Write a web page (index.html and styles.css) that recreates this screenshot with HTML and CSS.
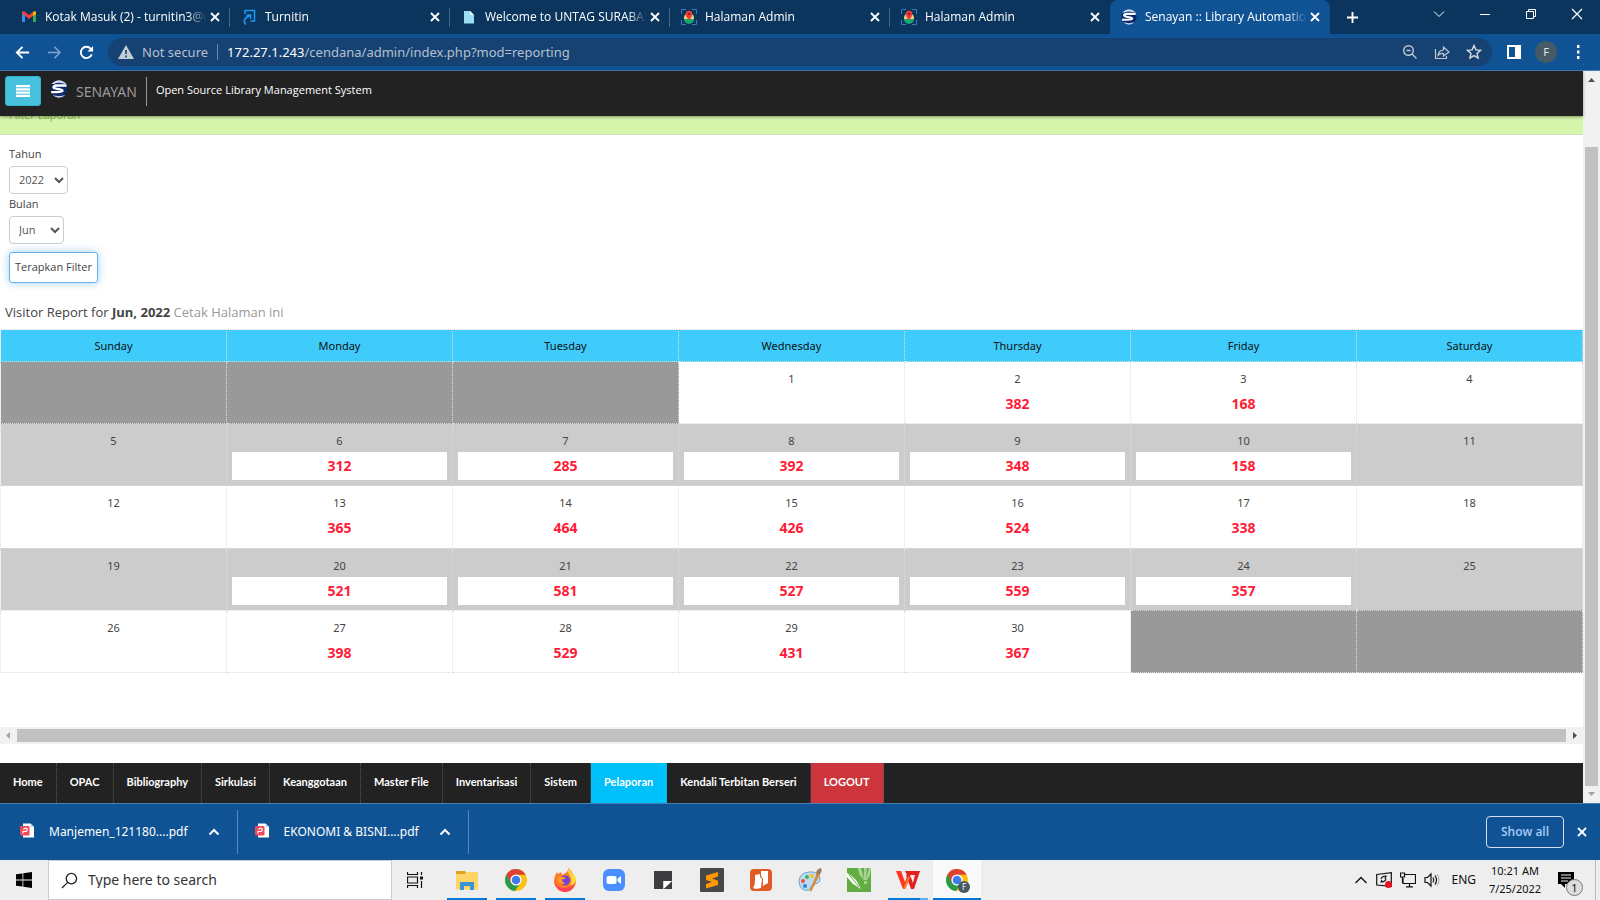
FILE: index.html
```html
<!DOCTYPE html>
<html lang="id">
<head>
<meta charset="utf-8">
<title>Senayan :: Library Automation</title>
<link rel="stylesheet" href="styles.css">
</head>
<body>
<svg class="defs" width="0" height="0" aria-hidden="true">
  <defs>
    <symbol id="x" viewBox="0 0 12 12"><path d="M2 2l8 8M10 2l-8 8" stroke="currentColor" stroke-width="1.8" fill="none"/></symbol>
    <symbol id="up" viewBox="0 0 12 12"><path d="M1.500 8.500L6 4l4.500 4.500" stroke="currentColor" stroke-width="2" fill="none"/></symbol>
    <symbol id="senayan" viewBox="0 0 18 18">
      <circle cx="9" cy="9" r="8.500" fill="#0b2a6b"/>
      <path d="M1.500 4Q9-3.500 16.500 4L13 3.500Q8 2 4 4z" fill="#cfdcef"/>
      <path d="M16.500 5.500H6.500Q3 5.700 3.500 7.500Q4.500 8.700 9 9.200Q13 9.800 12.500 11Q12 12.200 1.200 12.200" fill="none" stroke="#fff" stroke-width="2.300"/>
      <path d="M2.500 15Q9 20.500 15.500 15Q9 16.800 2.500 15z" fill="#c7d6ee"/>
    </symbol>
    <symbol id="map" viewBox="0 0 16 16">
      <path d="M.5 5V.5H5M11 .5h4.500V5M15.500 11v4.500H11M5 15.500H.5V11" fill="none" stroke="#3d78bd"/>
      <circle cx="8" cy="9" r="5" fill="#f4d27a"/>
      <path d="M3 10h10a5 5 0 0 1-10 0z" fill="#14a672"/>
      <path d="M8 11Q4.500 7.500 4.800 5a3.200 3.200 0 0 1 6.400 0Q11.500 7.500 8 11z" fill="#ef3b36"/><circle cx="8" cy="5" r="1.200" fill="#9d1c20"/>
    </symbol>
    <symbol id="pdf" viewBox="0 0 14 15">
      <path d="M3 .5h7.500L14 4v10.500H3z" fill="#fff"/><path d="M10.500.5V4H14z" fill="#c9d3e3"/>
      <rect y="3" width="9.500" height="9.500" rx="1" fill="#f04a5a"/>
      <path d="M3 10.500V8.500h2.500a1.700 1.700 0 1 0-1.700-1.700" fill="none" stroke="#fff" stroke-width="1.200"/>
    </symbol>
    <symbol id="chrome" viewBox="0 0 24 24">
      <circle cx="12" cy="12" r="11" fill="#fbc116"/>
      <path d="M12 12L2.500 6.500A11 11 0 0 0 11 23l5.500-8.500z" fill="#2a9a4b"/>
      <path d="M2.500 6.500A11 11 0 0 1 21.600 6.800H12L7 15z" fill="#dd4134"/>
      <circle cx="12" cy="12" r="5.600" fill="#fff"/><circle cx="12" cy="12" r="4.300" fill="#3b7bea"/>
    </symbol>
  </defs>
</svg>

<header class="browser">
  <div class="tabs">
    <div class="tab">
      <svg class="fav" viewBox="0 0 16 16"><path d="M1 3v10h3V6z" fill="#4285f4"/><path d="M12 6v7h3V3z" fill="#34a853"/><path d="M1 4.500V3Q2 1.500 4 3l4 3 4-3Q14 1.500 15 3v1.500L8 10z" fill="#ea4335"/><path d="M12 3.200Q14 1.500 15 3v2l-3 2.200z" fill="#fbbc04"/></svg>
      <span class="tab-title">Kotak Masuk (2) - turnitin3@u</span>
      <button class="tab-close" aria-label="Close tab"><svg><use href="#x"/></svg></button>
    </div>
    <div class="tab">
      <svg class="fav" viewBox="0 0 16 16"><path d="M4 5V1.500h9.500V12H9.500" fill="none" stroke="#1a9af5" stroke-width="1.500"/><path d="M5 15.500Q2.500 13.500 3.500 11T9 6.500M5.500 6h4v4" fill="none" stroke="#1a9af5" stroke-width="1.500"/></svg>
      <span class="tab-title">Turnitin</span>
      <button class="tab-close" aria-label="Close tab"><svg><use href="#x"/></svg></button>
    </div>
    <div class="tab">
      <svg class="fav" viewBox="0 0 16 16"><path d="M3 2h6l4 4v8.500H3z" fill="#9cddf5"/><path d="M9 2v4h4z" fill="#e8faff"/></svg>
      <span class="tab-title">Welcome to UNTAG SURABAY</span>
      <button class="tab-close" aria-label="Close tab"><svg><use href="#x"/></svg></button>
    </div>
    <div class="tab">
      <svg class="fav"><use href="#map"/></svg>
      <span class="tab-title">Halaman Admin</span>
      <button class="tab-close" aria-label="Close tab"><svg><use href="#x"/></svg></button>
    </div>
    <div class="tab">
      <svg class="fav"><use href="#map"/></svg>
      <span class="tab-title">Halaman Admin</span>
      <button class="tab-close" aria-label="Close tab"><svg><use href="#x"/></svg></button>
    </div>
    <div class="tab active">
      <svg class="fav"><use href="#senayan"/></svg>
      <span class="tab-title">Senayan :: Library Automation</span>
      <button class="tab-close" aria-label="Close tab"><svg><use href="#x"/></svg></button>
    </div>
    <button class="new-tab" aria-label="New tab"><svg viewBox="0 0 14 14"><path d="M7 1v12M1 7h12" stroke="#fff" stroke-width="2"/></svg></button>
    <div class="window-buttons">
      <button aria-label="Search tabs"><svg viewBox="0 0 12 12"><path d="M1 3.500l5 5 5-5" stroke="#fff" fill="none"/></svg></button>
      <button aria-label="Minimize"><svg viewBox="0 0 12 12"><path d="M1 6.500h10" stroke="#fff"/></svg></button>
      <button aria-label="Restore"><svg viewBox="0 0 12 12"><path d="M1.500 3.500h7v7h-7zM3.500 3.500v-2h7v7h-2" stroke="#fff" fill="none"/></svg></button>
      <button aria-label="Close"><svg viewBox="0 0 12 12"><path d="M1 1l10 10M11 1L1 11" stroke="#fff" stroke-width="1.200"/></svg></button>
    </div>
  </div>
  <div class="toolbar">
    <button class="nav-btn" aria-label="Back"><svg viewBox="0 0 16 16"><path d="M15 8H2M8 2L2 8l6 6" stroke="#fff" stroke-width="2" fill="none"/></svg></button>
    <button class="nav-btn" aria-label="Forward"><svg viewBox="0 0 16 16"><path d="M1 8h13M8 2l6 6-6 6" stroke="#7ba3ce" stroke-width="1.600" fill="none"/></svg></button>
    <button class="nav-btn" aria-label="Reload"><svg viewBox="0 0 16 16"><path d="M13.600 10A6 6 0 1 1 12.500 4" stroke="#fff" stroke-width="2" fill="none"/><path d="M15 1v6H9z" fill="#fff"/></svg></button>
    <div class="omnibox">
      <svg class="warn" viewBox="0 0 16 14"><path d="M8 0l8 14H0z" fill="#c3cbd5"/><path d="M8 5v4M8 10.500v2" stroke="#154272" stroke-width="1.600"/></svg>
      <span class="insecure">Not secure</span>
      <span class="url"><b>172.27.1.243</b>/cendana/admin/index.php?mod=reporting</span>
      <div class="omni-icons">
        <svg viewBox="0 0 16 16"><g fill="none" stroke="#c3c9d1" stroke-width="1.400"><circle cx="6.500" cy="6.500" r="4.800"/><path d="M10 10l4.500 4.500M4.500 6.500h4"/></g></svg>
        <svg viewBox="0 0 16 16"><g fill="none" stroke="#c3c9d1" stroke-width="1.200"><path d="M1.500 5v9.500h11V12"/><path d="M4 11.500Q4.500 6.500 9.500 6V3l5.500 5-5.500 4V9.500Q6 9 4 11.500z"/></g></svg>
        <svg viewBox="0 0 16 16"><path d="M8 1.500l1.900 4.400 4.700.4-3.600 3.100 1.100 4.700L8 11.600l-4.100 2.500L5 9.400 1.400 6.300l4.700-.4z" fill="none" stroke="#d6dae0" stroke-width="1.400"/></svg>
      </div>
    </div>
    <button class="tool-btn" aria-label="Side panel"><svg viewBox="0 0 14 14"><path d="M1 1h12v12H1z" fill="none" stroke="#fff" stroke-width="2"/><path d="M8 1h5v12H8z" fill="#fff"/></svg></button>
    <button class="avatar">F</button>
    <button class="tool-btn" aria-label="Menu"><svg viewBox="0 0 14 14"><path d="M6 0h2.500v3H6zM6 5.500h2.500v3H6zM6 11h2.500v3H6z" fill="#fff"/></svg></button>
  </div>
</header>

<div class="viewport">
  <div class="page">
    <div class="app-bar">
      <button class="menu" aria-label="Menu"><svg viewBox="0 0 14 12"><path d="M0 1.200h14M0 4.400h14M0 7.600h14M0 10.800h14" stroke="#fff" stroke-width="2.200"/></svg></button>
      <svg class="logo"><use href="#senayan"/></svg>
      <span class="brand">SENAYAN</span>
      <span class="tagline">Open Source Library Management System</span>
    </div>
    <main class="content">
      <div class="filter-head">Filter Laporan</div>
      <form class="filter">
        <label for="tahun">Tahun</label>
        <select id="tahun" class="year"><option>2022</option></select>
        <label for="bulan">Bulan</label>
        <select id="bulan" class="month"><option>Jun</option></select>
        <button type="button" class="apply">Terapkan Filter</button>
      </form>
      <p class="report-title">Visitor Report for <strong>Jun, 2022</strong> <a href="#print">Cetak Halaman ini</a></p>
      <table class="calendar">
        <thead><tr><th>Sunday</th><th>Monday</th><th>Tuesday</th><th>Wednesday</th><th>Thursday</th><th>Friday</th><th>Saturday</th></tr></thead>
        <tbody>
          <tr><td class="none"></td><td class="none"></td><td class="none"></td><td>1</td><td>2<div class="count">382</div></td><td>3<div class="count">168</div></td><td>4</td></tr>
          <tr class="alt"><td>5</td><td>6<div class="count">312</div></td><td>7<div class="count">285</div></td><td>8<div class="count">392</div></td><td>9<div class="count">348</div></td><td>10<div class="count">158</div></td><td>11</td></tr>
          <tr><td>12</td><td>13<div class="count">365</div></td><td>14<div class="count">464</div></td><td>15<div class="count">426</div></td><td>16<div class="count">524</div></td><td>17<div class="count">338</div></td><td>18</td></tr>
          <tr class="alt"><td>19</td><td>20<div class="count">521</div></td><td>21<div class="count">581</div></td><td>22<div class="count">527</div></td><td>23<div class="count">559</div></td><td>24<div class="count">357</div></td><td>25</td></tr>
          <tr><td>26</td><td>27<div class="count">398</div></td><td>28<div class="count">529</div></td><td>29<div class="count">431</div></td><td>30<div class="count">367</div></td><td class="none"></td><td class="none"></td></tr>
        </tbody>
      </table>
    </main>
    <div class="hscroll">
      <svg viewBox="0 0 17 17"><path d="M10 5v7L6 8.500z" fill="#a3a3a3"/></svg>
      <div class="thumb"></div>
      <svg viewBox="0 0 17 17"><path d="M7 5v7l4-3.500z" fill="#505050"/></svg>
    </div>
    <nav class="modules">
      <a href="#home">Home</a><a href="#opac">OPAC</a><a href="#bibliography">Bibliography</a><a href="#sirkulasi">Sirkulasi</a><a href="#keanggotaan">Keanggotaan</a><a href="#master">Master File</a><a href="#inventarisasi">Inventarisasi</a><a href="#sistem">Sistem</a><a href="#pelaporan" class="current">Pelaporan</a><a href="#kendali">Kendali Terbitan Berseri</a><a href="#logout" class="logout">LOGOUT</a>
    </nav>
  </div>
  <div class="vscroll">
    <svg viewBox="0 0 17 17"><path d="M5 11h7L8.500 7z" fill="#505050"/></svg>
    <div class="thumb"></div>
    <svg viewBox="0 0 17 17"><path d="M5 6h7l-3.500 4z" fill="#a3a3a3"/></svg>
  </div>
</div>

<div class="downloads">
  <div class="download"><svg class="file"><use href="#pdf"/></svg><span>Manjemen_121180....pdf</span><button aria-label="Options"><svg><use href="#up"/></svg></button></div>
  <div class="download"><svg class="file"><use href="#pdf"/></svg><span>EKONOMI &amp; BISNI....pdf</span><button aria-label="Options"><svg><use href="#up"/></svg></button></div>
  <button class="show-all">Show all</button>
  <button class="bar-close" aria-label="Close"><svg><use href="#x"/></svg></button>
</div>

<footer class="taskbar">
  <button class="start" aria-label="Start"><svg viewBox="0 0 16 16"><path d="M0 2.300L6.500 1.400v6.200H0zM7.300 1.300L16 0v7.600H7.300zM0 8.400h6.500v6.200L0 13.700zM7.300 8.400H16V16l-8.700-1.300z" fill="#000"/></svg></button>
  <label class="search"><svg viewBox="0 0 18 18"><g fill="none" stroke="#222" stroke-width="1.400"><circle cx="11" cy="7" r="5.500"/><path d="M7 11l-6 6"/></g></svg><input type="text" placeholder="Type here to search" aria-label="Search"></label>
  <div class="apps">
    <button class="task-view" aria-label="Task view"><svg viewBox="0 0 16 16"><path d="M.5 0v2.500h10V0M.5 5h10v6H.5zM.5 16v-2.500h10V16M14.500 0v3M14.500 9v7" fill="none" stroke="#111" stroke-width="1.200"/><path d="M13 4.500h3v3h-3z" fill="#111"/></svg></button>
    <button class="app open" aria-label="File Explorer"><svg viewBox="0 0 24 24"><path d="M1 3h9l2 2h10v16H1z" fill="#e0a21c"/><path d="M1 6h9l1-2h12v17.500H1z" fill="#fdd465"/><path d="M5 22v-8h14v8h-4v-4H9v4z" fill="#3b93d6"/></svg></button>
    <button class="app open" aria-label="Chrome"><svg><use href="#chrome"/></svg></button>
    <button class="app open" aria-label="Firefox"><svg viewBox="0 0 24 24"><path d="M1 13Q1 8 4 4l1 2 3-2 1 3 5-3 2-4q2 3 4 6 3 3 3 7a11 11 0 0 1-22 0z" fill="#ff7a26"/><path d="M16 0q-2 4 1 8t0 9q5 0 6-5 0-4-3-6t-4-6z" fill="#ffdc3a"/><path d="M1 13q3 7 10 7t11-4q-2 7-10 8-9-1-11-11z" fill="#ff3f5c"/><circle cx="12" cy="12.500" r="5" fill="#7043d6"/><path d="M5 9q4-1 8 1-2 2-4 1 0 4 4 4-5 3-8-2z" fill="#ff9a2e"/></svg></button>
    <button class="app" aria-label="Zoom"><svg viewBox="0 0 24 24"><rect x="1" y="1" width="22" height="22" rx="6" fill="#4b8fff"/><rect x="4.500" y="8" width="10" height="8" rx="2" fill="#fff"/><path d="M15.500 11l3.500-3v8l-3.500-3z" fill="#fff"/></svg></button>
    <button class="app" aria-label="Notes"><svg viewBox="0 0 24 24"><path d="M3 3h18v18H3z" fill="#3d3d3f"/><path d="M12.500 21v-8H21z" fill="#fff"/><path d="M13 21l8-7.500V21z" fill="#3d3d3f"/><path d="M12.500 21v-8H21z" fill="#fff"/></svg></button>
    <button class="app" aria-label="Sublime Text"><svg viewBox="0 0 24 24"><rect width="24" height="24" rx="1" fill="#484848"/><path d="M6 7.500L18 4v4.500l-6 2 6 2.200V17L6 20.500V16l6-2-6-2z" fill="#ff9800"/></svg></button>
    <button class="app" aria-label="Nitro"><svg viewBox="0 0 24 24"><rect x="1" y="1" width="22" height="22" rx="4" fill="#e05a25"/><path d="M4 20Q6 17 6 12V7l5-1v3l2 2-1 9-5 1zM12 3h7v12l-5 3V11l-2-3z" fill="#fff"/></svg></button>
    <button class="app" aria-label="Paint"><svg viewBox="0 0 24 24"><path d="M1 14Q1 5 11 4t11 7q0 4-5 5t-5 6Q2 24 1 14z" fill="#bcdcf2" stroke="#72a3c5"/><circle cx="5" cy="13" r="2" fill="#e94f45"/><circle cx="9" cy="9" r="2" fill="#4eae45"/><circle cx="14" cy="8" r="2" fill="#f7bd29"/><circle cx="7" cy="18" r="2" fill="#397ed1"/><path d="M19 5l3 1-9 18-1-2z" fill="#d98636"/><path d="M18 6q0-5 5-6 2 4-2 7z" fill="#a77b57"/></svg></button>
    <button class="app" aria-label="CorelDRAW"><svg viewBox="0 0 24 24"><path d="M0 0h24v24H0z" fill="#62ad43"/><path d="M0 4l9 8 5 9-8-5-6-7z" fill="#fff"/><path d="M0 4l12 15" stroke="#62ad43"/><path d="M11 0q0 7 6 12h3q4-5 4-12h-2l-3 11L20 0h-3v11L14 0z" fill="#a6d292"/><path d="M17 13h3v3h-3z" fill="#a6d292"/></svg></button>
    <button class="app partial" aria-label="WPS Office"><svg viewBox="0 0 24 24"><path d="M0 3h5l4 11 3-8 2 4-5 11H7z" fill="#ff361f"/><path d="M9 3h15l-6 18h-3L10 7h4l3 8 2-8h-8z" fill="#e51f1d"/><path d="M14 9l-4.500 12H7L12.500 8z" fill="#ff7a2d"/></svg></button>
    <button class="app focused" aria-label="Chrome profile F"><svg><use href="#chrome"/></svg><span class="profile">F</span></button>
  </div>
  <div class="tray">
    <svg class="tray-up" viewBox="0 0 14 14"><path d="M1.500 10L7 4.500l5.500 5.500" fill="none" stroke="#111" stroke-width="1.400"/></svg>
    <svg viewBox="0 0 16 16"><path d="M.7 2.500L15.300.7v13.600L.7 13z" fill="none" stroke="#111" stroke-width="1.200"/><path d="M5 7q1-3 5-3l-1 3M10 7q-1 3-5 3l1-2" fill="none" stroke="#111" stroke-width="1.200"/><circle cx="12.500" cy="12.500" r="3.500" fill="#e81123"/></svg>
    <svg viewBox="0 0 16 16"><path d="M5 2.500h10.500v9H3V6M9.500 11.500v3M6 14.800h7M.5 1h4v4h-4zM2.500 5v6" fill="none" stroke="#111" stroke-width="1.200"/></svg>
    <svg viewBox="0 0 16 16"><path d="M1 5.500h2.500L7 2v12L3.500 10.500H1zM9 5.500q1.500 2.500 0 5M11 3.500q3 4.500 0 9" fill="none" stroke="#111" stroke-width="1.200"/><path d="M13 2q4 6 0 12" fill="none" stroke="#aaa"/></svg>
    <span class="lang">ENG</span>
    <time class="clock">10:21 AM<br>7/25/2022</time>
    <div class="notice"><svg viewBox="0 0 16 16"><path d="M0 0h16v12H7v4l-4-4H0z" fill="#000"/><path d="M3 3h10M3 6h10M3 9h7" stroke="#eee"/></svg><span class="badge">1</span></div>
  </div>
</footer>
</body>
</html>
```

FILE: styles.css
```css
* { box-sizing: border-box; }
body {
  margin: 0;
  height: 100vh;
  display: flex;
  flex-direction: column;
  overflow: hidden;
  font: 12px/16px "Noto Sans", "Open Sans", sans-serif;
  color: #444;
  background: #fff;
}
button { margin: 0; padding: 0; border: 0; background: none; font: inherit; color: inherit; }
a { color: inherit; text-decoration: none; }
svg { display: block; flex: none; }
.defs { position: absolute; }

/* browser chrome */
.browser { background: #0f5395; border-bottom: 1px solid #457fb3; color: #fff; }
.tabs { display: flex; height: 34px; padding-left: 10px; background: #0b355d; }
.tab { flex: 0 1 220px; min-width: 0; display: flex; align-items: center; padding: 0 7px 0 11px; position: relative; }
.tab::after { content: ""; position: absolute; right: 0; top: 8px; height: 19px; width: 1px; background: #49698a; }
.tab.active { background: #0f5395; border-radius: 8px 8px 0 0; }
.tab.active::after, .tab:nth-child(5)::after { display: none; }
.fav { width: 16px; height: 16px; margin-right: 8px; }
.tab-title {
  flex: 1; min-width: 0; overflow: hidden; white-space: nowrap;
  font-family: "Open Sans", sans-serif;
  -webkit-mask-image: linear-gradient(90deg, #000 88%, transparent);
  mask-image: linear-gradient(90deg, #000 88%, transparent);
}
.tab-close { padding: 2px; }
.tab-close svg, .bar-close svg { width: 12px; height: 12px; }
.new-tab { width: 44px; display: grid; place-items: center; }
.new-tab svg { width: 13px; height: 13px; }
.window-buttons { margin-left: auto; display: flex; height: 28px; }
.window-buttons button { width: 46px; display: grid; place-items: center; }
.window-buttons svg { width: 12px; height: 12px; }
.toolbar { display: flex; align-items: center; height: 36px; padding: 0 10px 0 6px; }
.nav-btn { width: 32px; height: 32px; display: grid; place-items: center; }
.nav-btn svg { width: 15px; height: 15px; }
.omnibox {
  flex: 1; display: flex; align-items: center; height: 28px; margin: 0 10px 0 6px; padding: 0 10px;
  border-radius: 14px; background: #154272; font-size: 13px; color: #b4c0cf;
}
.warn { width: 16px; height: 14px; }
.insecure { margin: 0 9px 0 8px; padding-right: 9px; border-right: 1px solid #6d88a6; }
.url b { font-weight: 400; color: #fff; }
.omni-icons { margin-left: auto; display: flex; gap: 16px; }
.omni-icons svg { width: 16px; height: 16px; }
.tool-btn { width: 24px; height: 28px; display: grid; place-items: center; }
.tool-btn svg { width: 14px; height: 14px; }
.avatar { width: 22px; height: 22px; margin: 0 9px; border-radius: 50%; background: #455a64; color: #dfe5e8; font-size: 11px; }

/* page */
.viewport { flex: 1; min-height: 0; display: flex; }
.page { flex: 1; min-width: 0; display: flex; flex-direction: column; }
.app-bar {
  display: flex; align-items: center; height: 45px; padding: 0 5px 5px; z-index: 1;
  background: #222; box-shadow: 0 1px 3px rgba(0, 0, 0, .4);
}
.menu { width: 36px; height: 30px; display: grid; place-items: center; border: 1px solid #2fb3cf; border-radius: 3px; background: #47c1dc; }
.menu svg { width: 14px; height: 12px; }
.logo { width: 18px; height: 18px; margin: 0 8px 4px 9px; }
.brand { padding-right: 9px; line-height: 29px; font-size: 14px; border-right: 1px solid #999; color: #999; }
.tagline { margin-left: 9px; padding-bottom: 2px; font: 500 11px/16px "Open Sans", sans-serif; color: #fff; }
.content { flex: 1; min-height: 0; overflow: hidden; }
.filter-head {
  display: flex; align-items: flex-end; height: 19px; padding: 0 9px 11px; overflow: hidden;
  background: #d5f5ab; border-bottom: 1px dotted #ccc; color: #83b943; font: 11px/16px "Open Sans", sans-serif;
}
.filter { display: flex; flex-direction: column; align-items: flex-start; padding: 11px 9px 0; font: 11px/16px "Open Sans", sans-serif; }
.filter label { line-height: 16px; margin-bottom: 4px; }
.filter select {
  height: 28px; margin-bottom: 2px; padding: 0 0 1px 5px; border: 1px solid #ccc; border-radius: 4px;
  background: #fff; color: #555; font: inherit;
}
.filter .year { width: 59px; }
.filter .month { width: 55px; }
.apply { margin-top: 6px; height: 31px; padding: 0 5px 2px; border: 1px solid #66afe9; border-radius: 3px; box-shadow: 0 0 8px rgba(102, 175, 233, .6); }
.report-title { margin: 19px 5px 7px; line-height: 20px; font-family: "Open Sans", sans-serif; font-size: 13px; }
.report-title a { color: #999; }
.calendar { width: 100%; height: 344px; table-layout: fixed; border-collapse: collapse; text-align: center; font-size: 11px; }
.calendar th, .calendar td { border: 1px dotted #ddd; vertical-align: top; }
.calendar th { height: 32px; padding: 0; vertical-align: middle; background: #40ccfa; color: #111; font-weight: 400; }
.calendar td { height: 62px; padding: 9px 5px 3px; }
.calendar .none { background: #999; }
.alt td { background: #ccc; }
.count { margin-top: 3px; line-height: 28px; background: #fff; color: #ff1c36; font-size: 14px; font-weight: 700; }
.hscroll { display: flex; height: 17px; margin-bottom: 19px; background: #f1f1f1; }
.hscroll svg, .vscroll svg { width: 17px; height: 17px; }
.hscroll .thumb { flex: 1; margin: 2px 0; background: #c1c1c1; }
.vscroll { display: flex; flex-direction: column; background: #f1f1f1; }
.vscroll .thumb { flex: 1; margin: 59px 2px 0; background: #c1c1c1; }
.modules { display: flex; height: 40px; background: #222; color: #fff; font: 700 11px/38px Lato, sans-serif; }
.modules a { padding: 0 13px; border-right: 1px dotted #555; white-space: nowrap; }
.modules .current { background: #00c0f9; border-color: #00c0f9; }
.modules .logout { background: #cb353b; }

/* downloads */
.downloads { display: flex; align-items: center; height: 57px; padding-right: 12px; border-top: 1px solid #457fb3; background: #0f5395; color: #fff; font-size: 12px; }
.download { display: flex; align-items: center; height: 44px; padding: 0 17px 0 20px; border-right: 1px solid #5a89b7; }
.download + .download { padding-left: 17px; }
.download .file { width: 14px; height: 15px; margin: 0 15px 4px 0; }
.download button { margin-left: 20px; }
.download button svg { width: 12px; height: 12px; }
.show-all { margin-left: auto; width: 78px; height: 32px; border: 1px solid #d5e0eb; border-radius: 4px; color: #a9cbf5; font-family: "Open Sans", sans-serif; font-size: 12px; font-weight: 600; }
.bar-close { margin-left: 12px; }

/* taskbar */
.taskbar { display: flex; height: 40px; background: #eee; color: #111; }
.start { width: 48px; display: grid; place-items: center; }
.start svg { width: 16px; height: 16px; }
.search { display: flex; align-items: center; flex: 0 1 344px; padding-left: 12px; border: 1px solid #ccc; background: #fff; }
.search svg { width: 17px; height: 17px; margin-right: 10px; }
.search input { flex: 1; min-width: 0; padding: 0; border: 0; outline: 0; font: inherit; font-size: 14px; }
.search input::placeholder { color: #333; opacity: 1; }
.apps { display: flex; gap: 9px; }
.apps button { width: 40px; position: relative; display: grid; place-items: center; }
.apps .task-view { width: 46px; }
.task-view svg { width: 16px; height: 16px; }
.app svg { width: 24px; height: 24px; }
.open::after, .partial::after, .focused::after { content: ""; position: absolute; left: 0; right: 0; bottom: 0; height: 2px; background: #0078d7; }
.partial::after { background: linear-gradient(90deg, #0078d7 80%, #66aee7 80%); }
.apps .focused { width: 48px; margin-left: -4px; background: #f9f9f9; }
.profile { position: absolute; right: 11px; bottom: 7px; width: 12px; height: 12px; border-radius: 50%; background: #455a64; color: #fff; font-size: 8px; line-height: 12px; }
.tray { display: flex; align-items: center; gap: 8px; margin-left: auto; padding-right: 4px; font-size: 12px; }
.tray > svg { width: 16px; height: 16px; }
.tray > .tray-up { width: 14px; height: 14px; }
.lang { margin-left: 3px; }
.clock { width: 62px; text-align: center; line-height: 18px; font-size: 11px; }
.notice { position: relative; align-self: stretch; display: flex; align-items: center; width: 42px; padding-left: 4px; border-right: 1px solid #bbb; }
.notice svg { width: 16px; height: 16px; }
.badge { position: absolute; right: 12px; bottom: 4px; width: 17px; height: 17px; border: 1px solid #777; border-radius: 50%; background: #ddd; font-size: 11px; line-height: 15px; text-align: center; }
```
